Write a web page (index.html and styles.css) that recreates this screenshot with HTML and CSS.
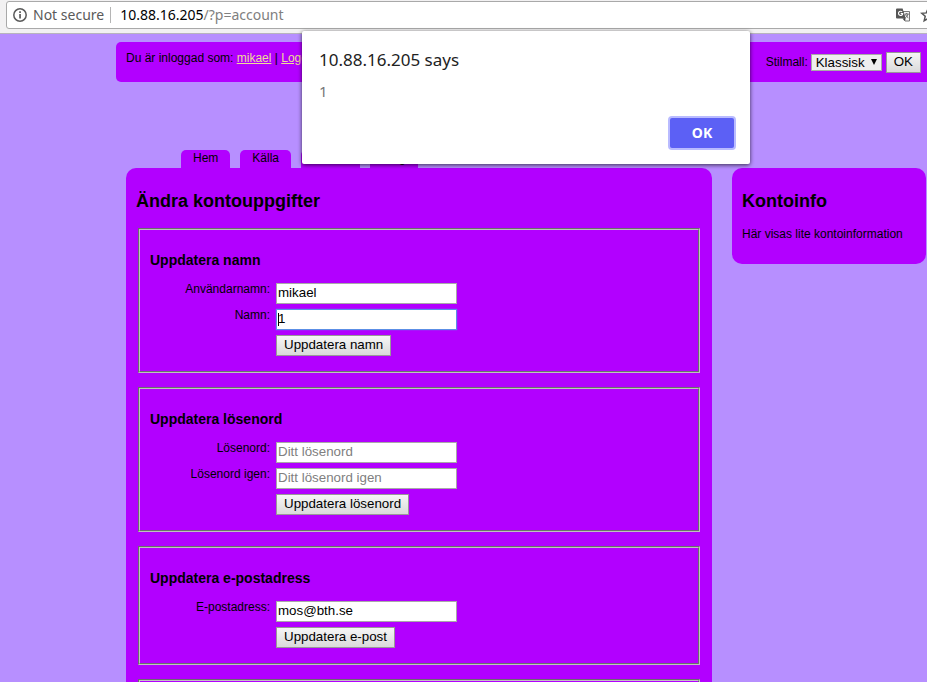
FILE: index.html
```html
<!DOCTYPE html>
<html lang="sv">
<head>
<meta charset="utf-8">
<title>Ändra kontouppgifter</title>
<link rel="stylesheet" href="styles.css">
</head>
<body>
<div class="window">
  <div class="toolbar">
    <div class="omnibox">
      <svg class="info" width="16" height="16" viewBox="0 0 16 16" aria-hidden="true"><circle cx="8" cy="8" r="6.2" fill="none" stroke="#5a5a5a" stroke-width="1.5"/><path d="M7.2 7h1.7v4.5H7.2zM7.2 4.3h1.7v1.6H7.2z" fill="#5a5a5a"/></svg>
      <span class="secure">Not secure</span>
      <span class="url"><span class="host">10.88.16.205</span>/?p=account</span>
      <svg class="translate" width="15" height="14" viewBox="0 0 15 14" aria-hidden="true"><path d="M7 3.500h6.500v9.500H9z" fill="#f4f4f4" stroke="#777"/><path d="M8.700 6h4M10.700 5v1M12 6c-.3 1.800-1.400 3-2.700 3.800M9.500 6.500c.5 1.500 1.500 2.500 2.800 3.300" fill="none" stroke="#666"/><path d="M1 .5h5.600L9.700 10.500H1a1 1 0 0 1-1-1v-8a1 1 0 0 1 1-1z" fill="#555"/><path d="M6.200 4A2.100 2.100 0 1 0 6.700 5.600H4.700" fill="none" stroke="#fff" stroke-width="1.100"/><path d="M6.500 10.500h3.200L8.500 13z" fill="#444"/></svg>
      <svg class="star" width="16" height="16" viewBox="0 0 16 16" aria-hidden="true"><path d="M8 1.800l1.700 4.100 4.500.4-3.400 3 1 4.400L8 11.400l-3.800 2.300 1-4.400-3.400-3 4.500-.4z" fill="none" stroke="#555" stroke-width="1.500"/></svg>
    </div>
  </div>

  <div class="page">
    <header class="topbar">
      <div class="login">Du är inloggad som: <a href="#">mikael</a> | <a href="#">Logga</a></div>
      <form class="style-form">
        <label for="style">Stilmall:</label>
        <span class="select-wrap"><select id="style"><option>Klassisk</option></select></span>
        <button type="button" class="btn">OK</button>
      </form>
    </header>

    <nav class="tabs">
      <a href="#">Hem</a>
      <a href="#">Källa</a>
      <a href="#">Forum</a>
      <a href="#">Blog</a>
    </nav>

    <div class="columns">
      <main class="card">
        <h1>Ändra kontouppgifter</h1>
        <form>
          <fieldset>
            <h2>Uppdatera namn</h2>
            <div class="row"><label for="user">Användarnamn:</label><input id="user" type="text" value="mikael"></div>
            <div class="row"><label for="name">Namn:</label><span class="focus-wrap"><input id="name" class="active" type="text" value="1"></span></div>
            <div class="row"><button type="button" class="btn">Uppdatera namn</button></div>
          </fieldset>
        </form>
        <form>
          <fieldset>
            <h2>Uppdatera lösenord</h2>
            <div class="row"><label for="pw">Lösenord:</label><input id="pw" type="password" placeholder="Ditt lösenord"></div>
            <div class="row"><label for="pw2">Lösenord igen:</label><input id="pw2" type="password" placeholder="Ditt lösenord igen"></div>
            <div class="row"><button type="button" class="btn">Uppdatera lösenord</button></div>
          </fieldset>
        </form>
        <form>
          <fieldset>
            <h2>Uppdatera e-postadress</h2>
            <div class="row"><label for="mail">E-postadress:</label><input id="mail" type="text" value="mos@bth.se"></div>
            <div class="row"><button type="button" class="btn">Uppdatera e-post</button></div>
          </fieldset>
        </form>
        <form>
          <fieldset></fieldset>
        </form>
      </main>
      <aside class="card">
        <h1>Kontoinfo</h1>
        <p>Här visas lite kontoinformation</p>
      </aside>
    </div>
  </div>

  <div class="dialog" role="dialog" aria-labelledby="dialog-title">
    <div class="dialog-title" id="dialog-title">10.88.16.205 says</div>
    <div class="dialog-text">1</div>
    <button type="button" class="dialog-ok">OK</button>
  </div>
</div>
</body>
</html>
```
FILE: styles.css
```css
* {
  box-sizing: border-box;
}

body {
  margin: 0;
  background: #b78fff;
  color: #000;
  font: 12px/16px "Liberation Sans", Arial, sans-serif;
}

.window {
  position: relative;
  height: 100vh;
  overflow: hidden;
}

.toolbar {
  height: 34px;
  padding: 1px 0 0 6px;
  background: #f2f1f2;
  border-bottom: 1px solid #b8b4bd;
  overflow: hidden;
  font: 14px/26px "Noto Sans", sans-serif;
}

.omnibox {
  display: flex;
  align-items: center;
  height: 28px;
  margin-right: -14px;
  padding: 0 4px 0 5px;
  background: #fff;
  border: 1px solid #a9a9a9;
  border-radius: 3px;
}

.secure {
  margin: 0 6px 0 5px;
  color: #5a5a5a;
}

.url {
  flex: 1;
  padding-left: 9px;
  color: #808080;
  line-height: 16px;
  border-left: 1px solid #b5b5b5;
}

.host {
  color: #000;
}

.star {
  margin-left: 9px;
}

.page {
  padding: 8px 0 0 116px;
}

.topbar {
  display: flex;
  justify-content: space-between;
  height: 40px;
  padding: 8px 6px 0 10px;
  background: #b200ff;
  border-radius: 5px 0 0 5px;
}

.topbar a {
  color: #f0dc96;
}

.style-form {
  display: flex;
  align-items: center;
  height: 24px;
}

.select-wrap {
  position: relative;
  margin: 0 4px 0 3px;
}

.select-wrap::after {
  content: "";
  position: absolute;
  top: 5px;
  right: 5px;
  border: solid transparent;
  border-width: 6px 3px 0;
  border-top-color: #000;
  pointer-events: none;
}

select {
  display: block;
  width: 71px;
  height: 17px;
  padding: 0 0 1px 4px;
  appearance: none;
  font-family: inherit;
  color: #000;
  background: #eee;
  border: 1px solid #a9a9a9;
  border-radius: 0;
}

.btn {
  height: 21px;
  padding: 0 7px 2px;
  font-family: inherit;
  color: #000;
  background: linear-gradient(#f6f6f6, #dadada);
  border: 1px solid #999;
  border-radius: 0;
}

.tabs {
  display: flex;
  gap: 10px;
  padding: 68px 0 0 65px;
}

.tabs a {
  height: 18px;
  padding: 0 12px;
  color: #000;
  background: #b200ff;
  border-radius: 5px 5px 0 0;
  text-decoration: none;
}

.columns {
  display: grid;
  grid-template-columns: 1fr 194px;
  gap: 20px;
  align-items: start;
  padding: 0 1px 0 10px;
}

.card {
  padding: 22px 10px;
  background: #b200ff;
  border-radius: 10px;
}

h1 {
  margin: 0 0 16px;
  font-size: 18px;
  line-height: 22px;
}

.card p {
  margin: 0;
}

aside h1 {
  margin-bottom: 14px;
}

fieldset {
  min-height: 80px;
  margin: 0 2px 14px;
  padding: 20px 10px 15px;
  border: 2px groove #c0c0c0;
}

h2 {
  margin: 0 0 13px;
  font-size: 14px;
  line-height: 20px;
}

.row {
  display: grid;
  grid-template-columns: 120px 181px;
  column-gap: 6px;
  margin-bottom: 5px;
}

.row:last-child {
  margin-bottom: 0;
}

.row label {
  line-height: 12px;
  text-align: right;
}

.row .btn {
  grid-column: 2;
  justify-self: start;
}

.row input {
  display: block;
  width: 100%;
  height: 21px;
  padding: 0 1px 2px;
  font-family: inherit;
  color: #000;
  background: #fff;
  border: 1px solid #a9a9a9;
  border-radius: 0;
}

.row input::placeholder {
  color: #808080;
}

.focus-wrap {
  position: relative;
}

.focus-wrap::after {
  content: "";
  position: absolute;
  left: 2px;
  top: 4px;
  width: 1px;
  height: 13px;
  background: #000;
}

.row .active {
  border-color: #5c8fe6;
  box-shadow: 0 0 1px #5c8fe6;
}

.dialog {
  position: absolute;
  left: 302px;
  top: 31px;
  display: flex;
  flex-direction: column;
  width: 448px;
  height: 133px;
  padding: 16px 16px 16px 17px;
  background: #fff;
  border-radius: 2px;
  box-shadow: 0 1px 4px rgba(0, 0, 0, 0.7);
  font-family: "Noto Sans", sans-serif;
}

.dialog-title {
  font-size: 17px;
  line-height: 26px;
  color: #222;
}

.dialog-text {
  margin-top: 8px;
  font-size: 15px;
  line-height: 20px;
  color: #777;
}

.dialog-ok {
  width: 64px;
  height: 30px;
  margin: auto 0 0 auto;
  padding: 0;
  font: bold 14px/30px "Noto Sans", sans-serif;
  color: #fff;
  background: #5c60f5;
  border: 0;
  border-radius: 2px;
  box-shadow: 0 0 0 2px #b9bbff;
}
```
